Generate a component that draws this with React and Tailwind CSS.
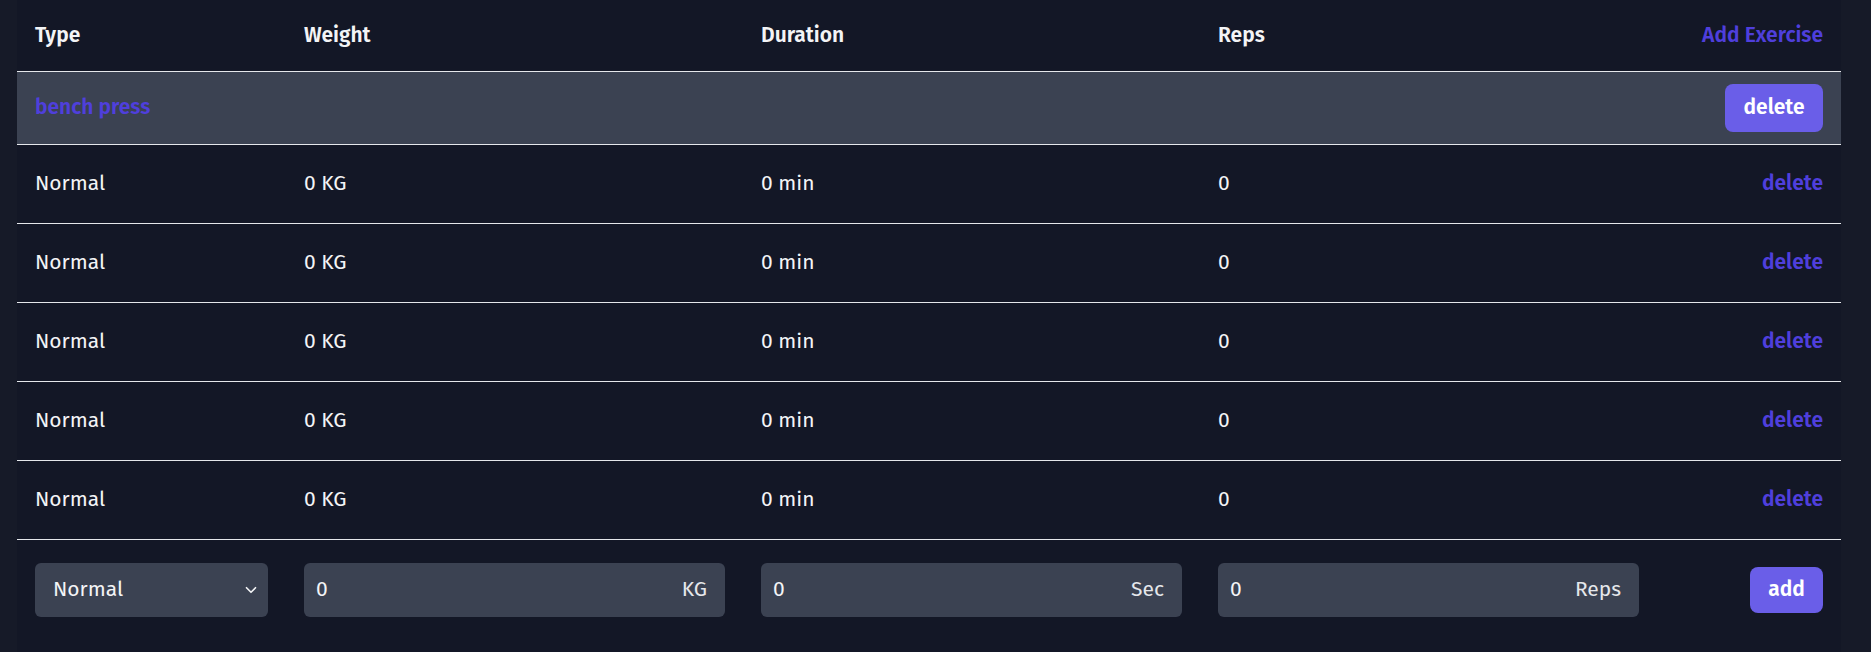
import React from "react";

function Chevron() {
  return (
    <svg width="18" height="18" viewBox="0 0 24 24" fill="none" stroke="currentColor" strokeWidth="2.2" strokeLinecap="round" strokeLinejoin="round">
      <path d="M6 9l6 6 6-6" />
    </svg>
  );
}

const rows = [1, 2, 3, 4, 5];
const grid = "grid grid-cols-[269px_457px_457px_457px_184px] items-center";

export default function App() {
  return (
    <div className="h-[652px] w-full overflow-hidden bg-[#161a28] pl-[17px] pr-[30px] text-[21px] text-[#f3f4f6]" style={{ fontFamily: "'Fira Sans', 'Open Sans', sans-serif" }}>
      <div className="h-full bg-[#131726]">
        <div className={`${grid} h-[72px] border-b border-[#e5e7eb] font-semibold`}>
          <div className="pl-[18px]">Type</div>
          <div className="pl-[18px]">Weight</div>
          <div className="pl-[18px]">Duration</div>
          <div className="pl-[18px]">Reps</div>
          <div className="pr-[18px] text-right text-[#4f3fdc]">Add Exercise</div>
        </div>
        <div className="flex h-[73px] items-center justify-between border-b border-[#e5e7eb] bg-[#3b4252] pl-[18px] pr-[18px]">
          <div className="font-semibold text-[#4f3fdc]">bench press</div>
          <button className="h-[48px] w-[98px] rounded-[8px] bg-[#6a5ee8] font-semibold text-white">delete</button>
        </div>
        {rows.map((r) => (
          <div key={r} className={`${grid} h-[79px] border-b border-[#e5e7eb]`}>
            <div className="pl-[18px]">Normal</div>
            <div className="pl-[18px]">0 KG</div>
            <div className="pl-[18px]">0 min</div>
            <div className="pl-[18px]">0</div>
            <div className="pr-[18px] text-right font-semibold text-[#4f3fdc]">delete</div>
          </div>
        ))}
        <div className={`${grid} pt-[23px]`}>
          <div className="px-[18px]">
            <div className="flex h-[54px] items-center justify-between rounded-[6px] bg-[#3b4252] pl-[18px] pr-[8px]">
              <span>Normal</span>
              <Chevron />
            </div>
          </div>
          {["KG", "Sec", "Reps"].map((s) => (
            <div key={s} className="px-[18px]">
              <div className="flex h-[54px] items-center justify-between rounded-[6px] bg-[#3b4252] pl-[12px] pr-[18px]">
                <span>0</span>
                <span className="text-[#e5e7eb]">{s}</span>
              </div>
            </div>
          ))}
          <div className="flex justify-end pr-[18px]">
            <button className="h-[46px] w-[73px] rounded-[8px] bg-[#6a5ee8] font-semibold text-white">add</button>
          </div>
        </div>
      </div>
    </div>
  );
}
